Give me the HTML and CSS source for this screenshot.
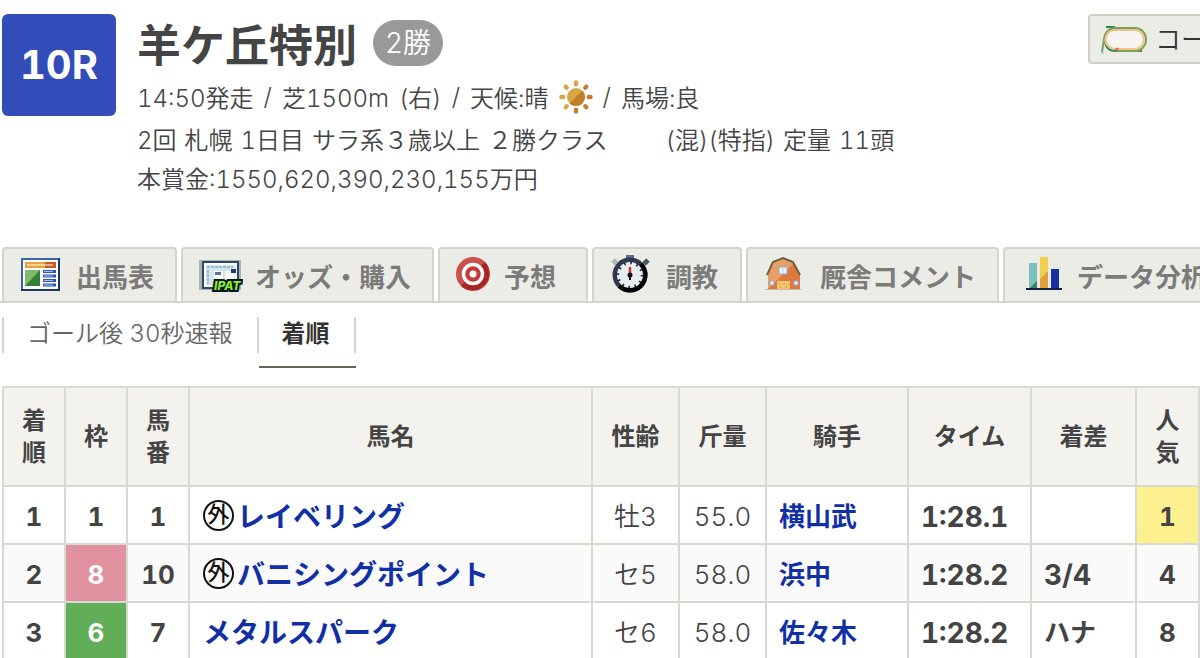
FILE: index.html
```html
<!DOCTYPE html>
<html lang="ja">
<head>
    <meta charset="UTF-8">
    <meta name="viewport" content="width=device-width, initial-scale=1.0">
    <title>羊ケ丘特別 レース結果</title>
    <link rel="stylesheet" href="styles.css">
</head>
<body>

    <div class="page">
        <header class="race-header">
            <div class="race-num">10R</div>
            <div class="race-info">
                <div class="race-title">
                    <h1>羊ケ丘特別</h1>
                    <span class="grade">2勝</span>
                </div>
                <p class="race-data">
                    <span>14:50発走</span>
                    <span>/</span>
                    <span>芝1500m</span>
                    <span>(右)</span>
                    <span>/</span>
                    <span>天候:晴</span>
                    <svg class="weather" viewBox="0 0 34 34" aria-label="晴">
                        <g stroke-width="4.4" stroke-linecap="round">
                            <path stroke="#d6a647" d="M17 2.4v1.8M6.7 6.7l1 1M2.4 17h1.8M6.7 27.3l1-1"/>
                            <path stroke="#c17f2b" d="M27.3 6.7l-1 1M31.6 17h-1.8M27.3 27.3l-1-1M17 31.6v-1.8"/>
                        </g>
                        <circle cx="17" cy="17" r="9" fill="#d6a647"/>
                        <path fill="#c17f2b" d="M23.4 10.6a9 9 0 0 1-12.8 12.8z"/>
                    </svg>
                    <span>/</span>
                    <span>馬場:良</span>
                </p>
                <p class="race-class">
                    <span>2回</span>
                    <span>札幌</span>
                    <span>1日目</span>
                    <span>サラ系３歳以上</span>
                    <span class="race-cond">２勝クラス</span>
                    <span>(混)(特指)</span>
                    <span>定量</span>
                    <span>11頭</span>
                </p>
                <p class="race-prize">本賞金:1550,620,390,230,155万円</p>
            </div>
            <button type="button" class="course-btn">
                <svg class="course-icon" viewBox="0 0 46 28" fill="none">
                    <rect x="4" y="3" width="40" height="21" rx="10.5" fill="#f6f5f1"/>
                    <path stroke="#2d8a4e" stroke-width="2" d="M5 1h9M4 16c1 6 5 9 11 9h26"/>
                    <path stroke="#7ba355" stroke-width="2" d="M1 26L3 13C4 6 8 2 15 2h19c6 0 11 5 11 11.500s-5 11.500-11 11.500H16"/>
                    <rect x="4.500" y="4" width="38.500" height="19" rx="9.500" stroke="#f2c08d" stroke-width="2"/>
                    <circle cx="16" cy="23" r="1.500" fill="#e5616b"/>
                    <circle cx="1.500" cy="26.500" r="1.200" fill="#7fc8d8"/>
                </svg>
                コース
            </button>
        </header>

        <nav class="tabs">
            <a href="#">
                <svg class="icon" viewBox="0 0 44 40">
                    <rect x="2" y="4" width="37" height="31" fill="#fff" stroke="#3c679e" stroke-width="2"/>
                    <path fill="none" stroke="#173a66" stroke-width="2" d="M39 3v32H1"/>
                    <path fill="#e9a13b" d="M5 7h20v6H5z"/>
                    <path fill="#cb5a1e" d="M25 7h11v6H25z"/>
                    <path stroke="#fff" d="M7 10h26"/>
                    <path fill="#82b96b" d="M5 15h15v16H5z"/>
                    <path fill="#36813a" d="M20 15v16H5z"/>
                    <path stroke="#2c54b2" stroke-width="3" d="M23 16.500h13M23 21h13M23 25.500h13M23 30h13"/>
                    <path stroke="#aabfe8" d="M24 16.500h9M24 21h9M24 25.500h9M24 30h9"/>
                </svg>
                出馬表
            </a>
            <a href="#">
                <svg class="icon" viewBox="0 0 44 40">
                    <path fill="#a6b3b3" d="M0 5h42v30H0z"/>
                    <rect x="4" y="7" width="35" height="26" fill="#fff" stroke="#29496d" stroke-width="2"/>
                    <path fill="#d5e5ed" d="M7 10h29v20H7z"/>
                    <path stroke="#9bbccd" stroke-width="2" d="M8 12h26M9 15v14" stroke-dasharray="3 1"/>
                    <path fill="#fff" d="M15 16h9v11h-9zM26 16h9v9h-9z"/>
                    <path fill="#5474a3" d="M16 17h6v3h-6z"/>
                    <path fill="#233c6d" d="M32 14h5v4h-5z"/>
                    <text x="15" y="35" class="ipat">IPAT</text>
                </svg>
                オッズ・購入
            </a>
            <a href="#">
                <svg class="icon icon-s" viewBox="0 0 36 40">
                    <circle cx="17" cy="19" r="17" fill="#c9504c"/>
                    <path fill="#a82726" d="M29 7A17 17 0 0 1 5 31z"/>
                    <circle cx="17" cy="19" r="9.500" fill="#c53b3a" stroke="#fff" stroke-width="3.500"/>
                    <circle cx="17" cy="19" r="3.500" fill="#fff"/>
                </svg>
                予想
            </a>
            <a href="#">
                <svg class="icon" viewBox="0 0 44 40">
                    <path stroke="#54738a" stroke-width="4" d="M20 0v6M16 1h8"/>
                    <path stroke="#a6bfbd" stroke-width="5" d="M3 5l4 4"/>
                    <path stroke="#3f5c62" stroke-width="5" d="M38 5l-4 4"/>
                    <circle cx="20" cy="20" r="17.500" fill="#31384c"/>
                    <path fill="#000" d="M32.400 7.600A17.500 17.500 0 0 1 7.600 32.400z"/>
                    <circle cx="20" cy="20" r="13" fill="#e9eef3"/>
                    <circle cx="20" cy="20" r="12" fill="none" stroke="#111622" stroke-width="2.500" stroke-dasharray="1.500 4.783"/>
                    <path stroke="#d9302c" stroke-width="2.500" d="M20 12v8"/>
                    <path stroke="#111" stroke-width="2" d="M20 18v7"/>
                    <circle cx="20" cy="20" r="2.500" fill="#111"/>
                </svg>
                調教
            </a>
            <a href="#">
                <svg class="icon" viewBox="0 0 44 40">
                    <path fill="#e8a066" d="M4 34V19L10 7l9-4 9 4 8 12v15z"/>
                    <path fill="#df793f" d="M36 19v15H4L29 9z"/>
                    <path fill="none" stroke="#715f3c" stroke-width="2" d="M3 20L9 7l10-4 10 4 7 13"/>
                    <path fill="#edf4fa" stroke="#8baed0" d="M15 12h8v7h-8zM6 26h4v4H6zM30 26h4v4h-4z"/>
                    <path stroke="#c3d5e6" d="M19 12v7"/>
                    <path fill="#f4c66b" d="M13 26h13v8H13z"/>
                    <path stroke="#d9983c" stroke-dasharray="2 3" d="M14 29h12M16 32h10"/>
                    <path stroke="#c9b6a5" d="M1 34.500h37"/>
                </svg>
                厩舎コメント
            </a>
            <a href="#">
                <svg class="icon" viewBox="0 0 44 40">
                    <path fill="#7bc1b9" d="M8 8h8v26H8z"/>
                    <path fill="#36826d" d="M16 26v8H8z"/>
                    <path fill="#f0d04e" d="M19 2h8v32h-8z"/>
                    <path fill="#e2a03b" d="M27 16v18h-8V24z"/>
                    <path fill="#172fa5" d="M30 14h8v20h-8z"/>
                    <path stroke="#132245" stroke-width="2" d="M5 34h36"/>
                </svg>
                データ分析
            </a>
        </nav>

        <nav class="subtabs">
            <a href="#">ゴール後 30秒速報</a>
            <a href="#" class="active">着順</a>
        </nav>

        <table class="result">
            <colgroup>
                <col class="c-num">
                <col class="c-num">
                <col class="c-num">
                <col>
                <col class="c-age">
                <col class="c-age">
                <col class="c-jockey">
                <col class="c-time">
                <col class="c-margin">
                <col class="c-pop">
            </colgroup>
            <thead>
                <tr>
                    <th>着<br>順</th>
                    <th>枠</th>
                    <th>馬<br>番</th>
                    <th>馬名</th>
                    <th>性齢</th>
                    <th>斤量</th>
                    <th>騎手</th>
                    <th>タイム</th>
                    <th>着差</th>
                    <th>人<br>気</th>
                </tr>
            </thead>
            <tbody>
                <tr>
                    <td class="num">1</td>
                    <td class="num">1</td>
                    <td class="num">1</td>
                    <td class="horse"><span class="gai">外</span><a href="#">レイベリング</a></td>
                    <td class="age">牡3</td>
                    <td class="age">55.0</td>
                    <td><a href="#">横山武</a></td>
                    <td class="time">1:28.1</td>
                    <td class="time"></td>
                    <td class="num top">1</td>
                </tr>
                <tr>
                    <td class="num">2</td>
                    <td class="num waku8">8</td>
                    <td class="num">10</td>
                    <td class="horse"><span class="gai">外</span><a href="#">バニシングポイント</a></td>
                    <td class="age">セ5</td>
                    <td class="age">58.0</td>
                    <td><a href="#">浜中</a></td>
                    <td class="time">1:28.2</td>
                    <td class="time">3/4</td>
                    <td class="num">4</td>
                </tr>
                <tr>
                    <td class="num">3</td>
                    <td class="num waku6">6</td>
                    <td class="num">7</td>
                    <td class="horse"><a href="#">メタルスパーク</a></td>
                    <td class="age">セ6</td>
                    <td class="age">58.0</td>
                    <td><a href="#">佐々木</a></td>
                    <td class="time">1:28.2</td>
                    <td>ハナ</td>
                    <td class="num">8</td>
                </tr>
            </tbody>
        </table>
    </div>

</body>
</html>
```
FILE: styles.css
```css
* {
    box-sizing: border-box;
}
body {
    margin: 0;
    font-family: Inter, "Noto Sans CJK JP", sans-serif;
    font-size: 24px;
    font-variant-numeric: tabular-nums;
    color: #444;
    background: #fff;
}
a {
    color: #1130a5;
    text-decoration: none;
}
h1, p {
    margin: 0;
}
.page {
    padding: 14px 0 0 2px;
    overflow: hidden;
}

/* race header */
.race-header {
    display: flex;
    align-items: flex-start;
    height: 233px;
}
.race-num {
    flex: none;
    width: 114px;
    height: 102px;
    margin-right: 21px;
    border-radius: 6px;
    background: #324cba;
    color: #fff;
    font-size: 40px;
    font-weight: 700;
    line-height: 102px;
    text-align: center;
}
.race-info {
    flex: 1;
    font-weight: 350;
    white-space: nowrap;
}
.race-title {
    display: flex;
    align-items: flex-start;
    gap: 16px;
    height: 60px;
}
h1 {
    font-size: 44px;
    line-height: 64px;
}
.grade {
    margin-top: 6px;
    padding: 0 12px;
    border-radius: 23px;
    background: #999;
    color: #fff;
    font-size: 28px;
    line-height: 46px;
}
.race-data {
    display: flex;
    align-items: center;
    gap: 10px;
    height: 45px;
}
.weather {
    width: 34px;
    height: 34px;
}
.race-class {
    display: flex;
    gap: 8px;
    line-height: 44px;
}
.race-cond {
    margin-right: 50px;
}
.race-prize {
    line-height: 34px;
}
.course-btn {
    display: flex;
    align-items: center;
    gap: 8px;
    flex: none;
    width: 212px;
    height: 50px;
    margin-right: -100px;
    padding: 0 11px 4px;
    border: 2px solid #d1cfc4;
    border-radius: 4px;
    background: #ebece6;
    color: #333;
    font: inherit;
    font-size: 26px;
    font-weight: 350;
}
.course-icon {
    width: 46px;
    height: 28px;
    margin-top: 6px;
}

/* main tabs */
.tabs {
    display: flex;
    gap: 4px;
    margin-left: -2px;
    padding-left: 2px;
    border-bottom: 2px solid #d3d4ca;
}
.tabs a {
    display: flex;
    align-items: center;
    gap: 12px;
    flex: none;
    height: 54px;
    min-width: 150px;
    padding: 0 21px 0 16px;
    border: 2px solid #d3d4ca;
    border-bottom: 0;
    border-radius: 4px 4px 0 0;
    background: #ebece6;
    color: #7b7c79;
    font-size: 26px;
    font-weight: 700;
}
.icon {
    width: 44px;
    height: 40px;
}
.icon-s {
    width: 36px;
}
.ipat {
    fill: #8dea2c;
    stroke: #061622;
    stroke-width: 4px;
    paint-order: stroke;
    font-size: 12px;
    font-style: italic;
    font-weight: 800;
}

/* sub tabs */
.subtabs {
    display: flex;
    height: 83px;
    padding-top: 14px;
}
.subtabs a {
    position: relative;
    height: 36px;
    padding: 0 24px 0 23px;
    border-left: 2px solid #d3d4ca;
    color: #666;
    font-weight: 350;
    line-height: 34px;
}
.subtabs .active {
    border-right: 2px solid #d3d4ca;
    color: #333;
    font-weight: 700;
}
.subtabs .active::after {
    content: "";
    position: absolute;
    left: 0;
    right: -2px;
    bottom: -15px;
    height: 2px;
    background: #6b6259;
}

/* result table */
.result {
    width: 100%;
    table-layout: fixed;
    border-collapse: collapse;
}
.result th, .result td {
    border: 2px solid #d8d9d0;
}
.result th {
    height: 99px;
    padding: 0;
    background: #f3f2ed;
    line-height: 32px;
}
.result td {
    height: 58px;
    padding: 4px 12px 0;
    font-size: 26px;
    font-weight: 700;
    line-height: 36px;
    white-space: nowrap;
}
.result tbody tr:nth-child(even) {
    background: #fafafa;
}
.result .num {
    padding: 4px 0 0;
    text-align: center;
}
.result .horse {
    padding-left: 13px;
    font-size: 28px;
}
.result .time {
    font-size: 28px;
}
.result .age {
    padding: 4px 0 0;
    font-weight: 350;
    text-align: center;
}
.result .waku8 {
    background: #e0919e;
    color: #fff;
}
.result .waku6 {
    background: #62ad58;
    color: #fff;
}
.result .top {
    background: #fdf08e;
}
.gai {
    display: inline-block;
    width: 31px;
    height: 31px;
    margin: 1px 3px 0 0;
    border: 2px solid #111;
    border-radius: 50%;
    color: #111;
    font-size: 22px;
    font-weight: 500;
    line-height: 25px;
    text-align: center;
    vertical-align: top;
}
.c-num {
    width: 62px;
}
.c-age {
    width: 87px;
}
.c-jockey {
    width: 142px;
}
.c-time {
    width: 123px;
}
.c-margin {
    width: 105px;
}
.c-pop {
    width: 63px;
}
```
